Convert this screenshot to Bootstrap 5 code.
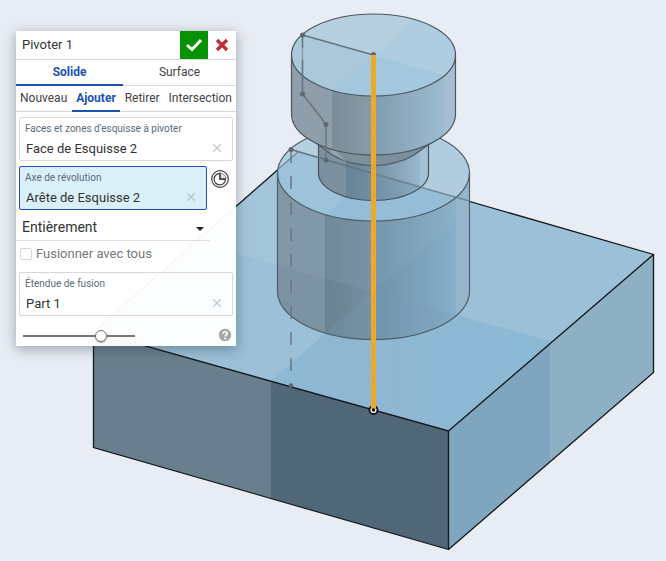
<!DOCTYPE html>
<html lang="fr">
<head>
<meta charset="utf-8">
<meta name="viewport" content="width=device-width, initial-scale=1">
<title>Pivoter 1</title>
<link rel="stylesheet" href="https://cdn.jsdelivr.net/npm/bootstrap@5.3.0/dist/css/bootstrap.min.css">
<style>
body{background:#e8ecf4;font-family:Roboto,"Liberation Sans",sans-serif;font-size:14px;line-height:20px;color:#333}
.scene{display:block;width:100%;height:auto}
.dialog-panel{top:31px;left:16px;width:220px;background:rgba(255,255,255,.965);box-shadow:0 3px 12px rgba(40,50,60,.4)}
.dialog-head{height:29px;border-bottom:1px solid #d8d8d8}
.dialog-head h1{font-size:13px;line-height:28px;font-weight:400;padding-left:6px}
.head-btn{width:28px;height:28px;border:0;padding:0;background:transparent}
.head-btn svg,.help-btn svg,.arc-btn svg,.clear-btn svg{display:block;margin:auto}
.head-btn.accept{background:#059305}
.tab-line{height:26px;border-bottom:1px solid #d8d8d8}
.tab-line button{height:26px;border:0;border-bottom:2px solid transparent;background:transparent;padding:0;font-size:12px;line-height:24px;color:#444;text-align:center}
.tab-line button.active{color:#1b52b0;border-color:#1b52b0;font-weight:700}
.kind-tabs button:first-child{width:107px}
.op-tabs button{padding:0 4px}
.pick-list{padding:5px 3px 0;gap:5px}
.pick-box{min-width:0;height:44px;border:1px solid #d8d8d8;border-radius:2px;padding:4px 6px 0 5px}
.pick-box.active{background:#daf0f8;border-color:#1b52b0}
.pick-box label{display:block;font-size:10px;line-height:14px;color:#5d6b78}
.pick-box input{border:0;background:transparent;padding:0 0 0 1px;width:100%;min-width:0;height:24px;color:#333;outline:0;font-size:13px}
.clear-btn,.arc-btn,.help-btn{border:0;background:transparent;padding:0}
.clear-btn{width:18px;flex:none}
.arc-btn{width:26px;padding-top:3px}
.type-row{width:194px;margin-top:4px;border-bottom:1px solid #e0e0e0}
.type-row select{appearance:none;border:0;background:transparent;width:100%;height:26px;padding:0 6px;font-size:14px;color:#333}
.merge-row{color:#777;height:26px}
.merge-row input{appearance:none;width:12px;height:12px;border:1px solid #d5d5d5;border-radius:2px;background:#fff;margin:0}
.merge-row label{font-size:13px}
.scope-row{padding:5px 3px 0}
.fade-row{height:20px;margin-top:10px;padding:0 4px 0 7px}
.help-btn{margin-bottom:2px}
.fade-range{appearance:none;width:112px;height:14px;background:transparent;margin:0}
.fade-range::-webkit-slider-runnable-track{height:2px;background:#777}
.fade-range::-webkit-slider-thumb{appearance:none;width:12px;height:12px;margin-top:-5px;border:1px solid #777;border-radius:50%;background:#fff;box-shadow:0 1px 1px rgba(0,0,0,.3)}
</style>
<script src="https://cdn.jsdelivr.net/npm/bootstrap@5.3.0/dist/js/bootstrap.bundle.min.js"></script>
</head>
<body>
<main class="position-relative min-vh-100 overflow-hidden">
<svg class="scene" viewBox="0 0 666 561" role="img" aria-label="Part 1">
  <defs>
    <linearGradient id="gHead" gradientUnits="userSpaceOnUse" x1="332" x2="444" y1="0" y2="0"><stop offset="0" stop-color="#7a8c97"/><stop offset=".36" stop-color="#889ba7"/><stop offset=".38" stop-color="#809caf"/><stop offset="1" stop-color="#9cbcd1"/></linearGradient>
    <linearGradient id="gNeck" gradientUnits="userSpaceOnUse" x1="346" x2="420" y1="0" y2="0"><stop offset="0" stop-color="#698191"/><stop offset=".36" stop-color="#7690a1"/><stop offset="1" stop-color="#98b8ce"/></linearGradient>
    <linearGradient id="gBase" gradientUnits="userSpaceOnUse" x1="325" x2="456" y1="0" y2="0"><stop offset="0" stop-color="#6a8292"/><stop offset=".35" stop-color="#748fa1"/><stop offset=".38" stop-color="#6f92aa"/><stop offset="1" stop-color="#88afc9"/></linearGradient>
    <linearGradient id="gTop" gradientUnits="userSpaceOnUse" x1="271" x2="500" y1="0" y2="0"><stop offset="0" stop-color="#8cb9d4"/><stop offset=".35" stop-color="#90b6d2"/><stop offset="1" stop-color="#8cb9d4"/></linearGradient>
    <clipPath id="cHead"><ellipse cx="373.5" cy="55" rx="82" ry="41"/></clipPath>
    <clipPath id="cLower"><ellipse cx="373.5" cy="173" rx="96" ry="48"/></clipPath>
    <clipPath id="cHeadBody"><path d="M291.500 55V114A82 41 0 0 0 455.500 114V55A82 41 0 0 1 291.500 55Z"/></clipPath>
    <clipPath id="cNeck"><path d="M318.500 137V173A55 27.500 0 0 0 428.500 173V137Z"/></clipPath>
    <clipPath id="cBase"><path d="M277.500 173V291.500A96 48 0 0 0 469.500 291.500V173A96 48 0 0 1 277.500 173Z"/></clipPath>
    <clipPath id="cTop"><path d="M93.500 331.500 298 152 653.500 254.500 448.500 431Z"/></clipPath>
  </defs>
  <!-- block -->
  <g clip-path="url(#cTop)">
    <path fill="#9bc0d7" d="M80 140H670V440H80Z"/>
    <path fill="#a3c5da" d="M373 292 190 240 298 140 540 149Z"/>
    <path fill="url(#gTop)" d="M373 292 271 381 448 440 552 341.500Z"/>
  </g>
  <path fill="#697f8d" d="M93.500 331.500 271 381.500V498L93.500 447.500Z"/>
  <path fill="#4f6777" d="M271 381.500 448.500 431V549.500L271 498Z"/>
  <path fill="#7fa5bf" d="M448.500 431 550 343V462L448.500 549.500Z"/>
  <path fill="#8eb0c5" d="M550 343 653.500 254.500V372.500L550 462Z"/>
  <path d="M93.500 331.500 298 152 653.500 254.500 448.500 431ZM93.500 331.500V447.500L448.500 549.500V431M448.500 549.500 653.500 372.500V254.500" fill="none" stroke="#14191d" stroke-width="1.300"/>
  <!-- base cylinder -->
  <g clip-path="url(#cBase)">
    <path fill="#7c93a3" d="M270 120H325V345H270Z"/>
    <path fill="url(#gBase)" d="M325 120H456V345H325Z"/>
    <path fill="#94b5cb" d="M456 120H475V345H456Z"/>
    <path fill="#789db6" opacity=".25" d="M373 292 325 333V345H480V322Z"/>
    <path fill="#a8c2d2" opacity=".1" d="M373 292 270 263V170L480 200Z"/>
  </g>
  <g clip-path="url(#cLower)">
    <path fill="#9dc2da" d="M270 120H480V225H270Z"/>
    <path fill="#b0ccde" d="M373 173 440 115H480V204Z"/>
    <path fill="#95bdd8" d="M373 173 313 225H480V204Z"/>
    <path fill="#b5d0e1" d="M270 120H335L318 157 298 152 270 176Z"/>
    <path d="M270 176 298 152" fill="none" stroke="#6f8492" stroke-width="1.200"/>
  </g>
  <g fill="none" stroke="#4d5d67" stroke-width="1.200">
    <ellipse cx="373.500" cy="173" rx="96" ry="48"/>
    <path d="M277.500 173V291.500A96 48 0 0 0 469.500 291.500V173"/>
  </g>
  <!-- neck -->
  <g clip-path="url(#cNeck)">
    <path fill="#7b919f" d="M318 130H346V203H318Z"/>
    <path fill="url(#gNeck)" d="M346 130H420V203H346Z"/>
    <path fill="#a4c0d4" d="M420 130H430V203H420Z"/>
    <path fill="#668ca5" opacity=".3" d="M346 165 430 189V203H346Z"/>
  </g>
  <path d="M318.500 137V173A55 27.500 0 0 0 428.500 173V137" fill="none" stroke="#45545e" stroke-width="1.200"/>
  <path d="M309 139C318 143 324 150 332 155C344 162 358 165.500 374 165.500C390 165.500 404 161 414 155C423 149 430 143 438 139Z" fill="#7d8f9b" stroke="#4d5d67" stroke-width="1.200"/>
  <path d="M330 148 336 151 347 162 331 153Z" fill="#94a3ad"/>
  <!-- head -->
  <g clip-path="url(#cHeadBody)">
    <path fill="#8e9eaa" d="M290 50H332V160H290Z"/>
    <path fill="url(#gHead)" d="M332 50H444V160H332Z"/>
    <path fill="#a7bfd3" d="M444 50H457V160H444Z"/>
  </g>
  <g clip-path="url(#cHead)">
    <path fill="#b7d0e0" d="M290 10H460V100H290Z"/>
    <path fill="#abc8da" d="M373 55 290 32V120L300 119Z"/>
    <path fill="#afcde0" d="M373 55 425 10H460V80Z"/>
    <path fill="#a3c7dc" d="M373 55 460 80V100H321Z"/>
  </g>
  <g fill="none" stroke="#4c565d" stroke-width="1.200">
    <ellipse cx="373.500" cy="55" rx="82" ry="41"/>
    <path d="M291.500 55V114A82 41 0 0 0 455.500 114V55"/>
  </g>
  <!-- sketch profile -->
  <g fill="none" stroke="#65747e" stroke-width="1.400">
    <path d="M373.500 55 302.500 35M302.500 94 326 124V160"/>
    <path d="M302.500 35V94" stroke-dasharray="13 12 42"/>
    <path d="M302.500 35V94" opacity=".5"/>
    <path d="M291 149.500 373 173.500"/>
    <path d="M373 173.500 469 201" opacity=".7"/>
    <path d="M291 150V386" stroke-dasharray="13 13"/>
  </g>
  <g fill="#5c6971"><circle cx="302.500" cy="35" r="2.500"/><circle cx="302.500" cy="94" r="2.500"/><circle cx="326" cy="124.500" r="2.500"/><circle cx="326" cy="160" r="2.500"/><circle cx="291" cy="149.500" r="2.500"/><circle cx="291" cy="385.500" r="2.200"/><circle cx="373.500" cy="54.500" r="2.500"/></g>
  <!-- axis -->
  <circle cx="373.500" cy="410" r="4" fill="#fff" stroke="#111" stroke-width="1.800"/>
  <path d="M373.500 55V409" stroke="#eeaa2b" stroke-width="5"/>
  <path d="M373.500 60V405" stroke="#dfa233" stroke-width="2" stroke-dasharray="13 13" opacity=".7"/>
  <circle cx="373.500" cy="410" r="1.800" fill="#111"/>
</svg>

<form class="dialog-panel position-absolute">
  <header class="dialog-head d-flex">
    <h1 class="m-0 flex-grow-1">Pivoter 1</h1>
    <button type="button" class="head-btn accept" aria-label="Accepter"><svg width="18" height="14" viewBox="0 0 18 14"><path d="M2 7 7 11.500 16 2" fill="none" stroke="#fff" stroke-width="3"/></svg></button>
    <button type="button" class="head-btn" aria-label="Annuler"><svg width="14" height="14" viewBox="0 0 14 14"><path d="M2 2 12 12M12 2 2 12" stroke="#c0303a" stroke-width="3.400"/></svg></button>
  </header>
  <div class="tab-line kind-tabs d-flex">
    <button type="button" class="active">Solide</button>
    <button type="button" class="flex-grow-1">Surface</button>
  </div>
  <div class="tab-line op-tabs d-flex justify-content-between">
    <button type="button">Nouveau</button><button type="button" class="active">Ajouter</button><button type="button">Retirer</button><button type="button">Intersection</button>
  </div>
  <div class="pick-list d-flex flex-column">
    <div class="pick-box">
      <label for="faces">Faces et zones d'esquisse à pivoter</label>
      <div class="d-flex"><input id="faces" value="Face de Esquisse 2" readonly><button type="button" class="clear-btn" aria-label="Effacer"><svg width="8" height="8" viewBox="0 0 8 8"><path d="M0 0 8 8M8 0 0 8" stroke="#c6c9cc" stroke-width="1.300"/></svg></button></div>
    </div>
    <div class="d-flex align-items-start">
      <div class="pick-box active flex-fill">
        <label for="axis">Axe de révolution</label>
        <div class="d-flex"><input id="axis" value="Arête de Esquisse 2" readonly><button type="button" class="clear-btn" aria-label="Effacer"><svg width="8" height="8" viewBox="0 0 8 8"><path d="M0 0 8 8M8 0 0 8" stroke="#b3c5cd" stroke-width="1.300"/></svg></button></div>
      </div>
      <button type="button" class="arc-btn flex-shrink-0" aria-label="Connecteur de contrainte"><svg width="20" height="20" viewBox="0 0 20 20" fill="none" stroke="#444"><circle cx="10" cy="10" r="8.300" stroke-width="1.200"/><path d="M10 4.500A5.700 5.700 0 1 0 15.500 10H10Z" stroke-width="1.300"/><path d="M10 4A6 6 0 0 1 16 10H10Z" fill="#ddd" stroke="#777" stroke-width=".8"/><path d="M10 4V10H16" stroke-width="1.500"/></svg></button>
    </div>
  </div>
  <div class="type-row position-relative">
    <select aria-label="Type de révolution"><option>Entièrement</option></select>
    <svg class="position-absolute top-50 end-0 me-1 pe-none" width="12" height="5" viewBox="0 0 12 5"><path d="M2 0H10L6 4Z" fill="#222"/></svg>
  </div>
  <div class="merge-row d-flex align-items-center px-1 gap-1">
    <input id="merge" type="checkbox"><label for="merge">Fusionner avec tous</label>
  </div>
  <div class="scope-row">
    <div class="pick-box">
      <label for="scope">Étendue de fusion</label>
      <div class="d-flex"><input id="scope" value="Part 1" readonly><button type="button" class="clear-btn" aria-label="Effacer"><svg width="8" height="8" viewBox="0 0 8 8"><path d="M0 0 8 8M8 0 0 8" stroke="#c6c9cc" stroke-width="1.300"/></svg></button></div>
    </div>
  </div>
  <div class="fade-row d-flex align-items-center justify-content-between">
    <input type="range" class="fade-range" min="0" max="100" value="72" aria-label="Opacité">
    <button type="button" class="help-btn" aria-label="Aide"><svg width="14" height="14" viewBox="0 0 14 14"><circle cx="7" cy="7" r="6.200" fill="#a6a6a6"/><path d="M5 5.700C5 3 9.200 3.100 9.200 5.500C9.200 7 7.200 6.900 7.200 8.400" fill="none" stroke="#fff" stroke-width="1.600"/><circle cx="7.200" cy="10.400" r="1" fill="#fff"/></svg></button>
  </div>
</form>
</main>
</body>
</html>
